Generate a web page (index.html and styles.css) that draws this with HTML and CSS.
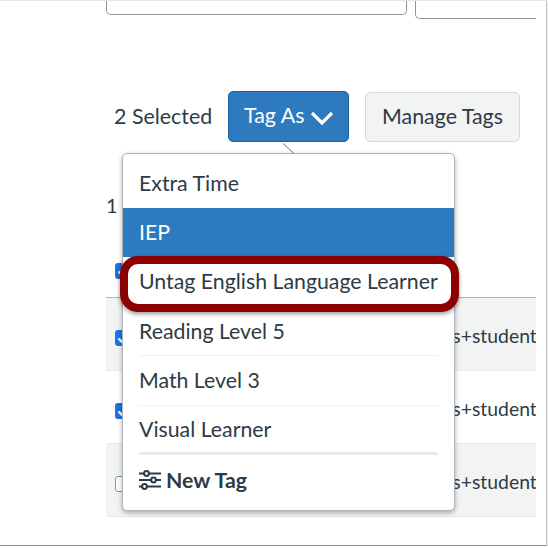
FILE: index.html
```html
<!DOCTYPE html>
<html>
	<head>
		<meta name="viewport" content="width=device-width,initial-scale=1.0">
		<title>Tag As</title>
		<link rel="stylesheet" href="styles.css">
	</head>
	<body>
		<div class="frame">
			<div class="filters">
				<div class="filter-cut filter-wide"></div>
				<div class="filter-cut filter-narrow"></div>
			</div>

			<div class="toolbar">
				<span class="selected-count">2 Selected</span>
				<button class="btn btn-primary">Tag As
					<svg class="chevron" viewBox="0 0 24 16" width="24" height="16"><path d="M2 3 L12 13 L22 3" fill="none" stroke="#fff" stroke-width="3.2"/></svg>
				</button>
				<button class="btn btn-light">Manage Tags</button>
			</div>

			<div class="count-line">1</div>

			<div class="table">
				<div class="row row-first">
					<span class="check check-on"><svg viewBox="0 0 16 16" width="16" height="16"><path d="M3.5 8.5 L6.5 11.5 L12.5 5" fill="none" stroke="#fff" stroke-width="2.4"/></svg></span>
				</div>
				<div class="row row-grey">
					<span class="check check-on"><svg viewBox="0 0 16 16" width="16" height="16"><path d="M3.5 8.5 L6.5 11.5 L12.5 5" fill="none" stroke="#fff" stroke-width="2.4"/></svg></span>
					<span class="email">es+student</span>
				</div>
				<div class="row">
					<span class="check check-on"><svg viewBox="0 0 16 16" width="16" height="16"><path d="M3.5 8.5 L6.5 11.5 L12.5 5" fill="none" stroke="#fff" stroke-width="2.4"/></svg></span>
					<span class="email">es+student</span>
				</div>
				<div class="row row-grey">
					<span class="check"></span>
					<span class="email">es+student</span>
				</div>
			</div>

			<div class="menu">
				<span class="menu-caret"></span>
				<div class="menu-item menu-item-first">Extra Time</div>
				<div class="menu-item menu-item-active">IEP</div>
				<div class="menu-item menu-item-plain">Untag English Language Learner</div>
				<div class="menu-item">Reading Level 5</div>
				<div class="menu-item">Math Level 3</div>
				<div class="menu-item menu-item-last">Visual Learner</div>
				<div class="menu-new">
					<svg class="sliders" viewBox="0 0 22 20" width="22" height="20">
						<g fill="none" stroke="#2d3b45" stroke-width="2">
							<path d="M0 3.5 H5 M10 3.5 H22 M0 10 H12 M17 10 H22 M0 16.5 H3 M8 16.5 H22"/>
							<circle cx="7.5" cy="3.5" r="2.4"/>
							<circle cx="14.5" cy="10" r="2.4"/>
							<circle cx="5.5" cy="16.5" r="2.4"/>
						</g>
					</svg>
					New Tag
				</div>
				<div class="callout"></div>
			</div>
		</div>
	</body>
</html>
```

FILE: styles.css
```css
* {
	box-sizing: border-box;
}

body {
	margin: 0;
	background: #fff;
	font-family: Lato, "Liberation Sans", sans-serif;
	color: #2d3b45;
}

.frame {
	position: relative;
	width: 547px;
	height: 546px;
	padding: 0 10px 0 106px;
	border-top: 1px solid #e8e8e8;
	border-bottom: 1px solid #8e8e8e;
	border-right: 1px solid #c4c4c4;
	box-shadow: 0 1px 2px rgba(0, 0, 0, 0.3);
	overflow: hidden;
}

.filters {
	display: flex;
	align-items: flex-start;
	gap: 8px;
	height: 18px;
}

.filter-cut {
	border: 1px solid #8a949e;
	border-top: none;
	border-radius: 0 0 5px 5px;
}

.filter-wide {
	width: 301px;
	height: 14px;
}

.filter-narrow {
	width: 121px;
	height: 18px;
	border-right: none;
	border-bottom-right-radius: 0;
}

.toolbar {
	display: flex;
	align-items: center;
	margin-top: 72px;
	padding-left: 8px;
	height: 51px;
}

.selected-count {
	font-size: 21.4px;
	width: 114px;
	margin-top: -2px;
}

.btn {
	height: 51px;
	border-radius: 5px;
	font-family: inherit;
	font-size: 21.4px;
}

.btn-primary {
	width: 121px;
	background: #2d7abf;
	border: 1px solid #22629b;
	color: #fff;
	padding: 0 0 3px 1px;
}

.chevron {
	vertical-align: -3px;
}

.btn-light {
	width: 155px;
	height: 50px;
	margin-left: 16px;
	margin-top: 1px;
	background: #f2f3f3;
	border: 1px solid #d7dadd;
	color: #2d3b45;
	padding: 0 0 2px;
}

.count-line {
	margin-top: 51px;
	font-size: 20px;
	line-height: 24px;
	height: 31px;
}

.row {
	display: flex;
	align-items: center;
	height: 73px;
	border-bottom: 1px solid #e6e8ea;
	padding: 7px 0 0 9px;
}

.row-first {
	height: 74px;
	padding-top: 21px;
	border-bottom: 1px solid #aeb5bb;
}

.row-grey {
	background: #f2f3f3;
}

.check {
	display: block;
	width: 16px;
	height: 16px;
	border: 1px solid #8a949e;
	border-radius: 3px;
	background: #fff;
}

.check-on {
	background: #1a73e8;
	border: none;
}

.check svg {
	display: block;
}

.email {
	margin-left: auto;
	margin-top: -5px;
	width: 94px;
	overflow: hidden;
	white-space: nowrap;
	font-size: 19.4px;
}

/* dropdown lies over the table */
.menu {
	position: absolute;
	left: 122px;
	top: 152px;
	width: 333px;
	height: 358px;
	background: #fff;
	border: 1px solid #aeb5bb;
	border-radius: 5px;
	box-shadow: 0 2px 5px rgba(0, 0, 0, 0.3);
}

.menu-caret {
	position: absolute;
	left: 158px;
	top: -6px;
	width: 15px;
	height: 1px;
	background: #8a949e;
	transform: rotate(43deg);
}

.menu-item {
	height: 49.5px;
	margin: 0 16px;
	border-bottom: 1px solid #eef0f1;
	font-size: 21.3px;
	line-height: 48px;
	white-space: nowrap;
}

.menu-item-first {
	height: 54px;
	margin: 0;
	padding: 5px 16px 0;
	border-bottom: none;
}

.menu-item-active {
	height: 49px;
	margin: 0;
	padding: 0 16px;
	background: #2d7abf;
	border-bottom: none;
	color: #fff;
}

.menu-item-plain {
	border-bottom: none;
}

.menu-item-last {
	line-height: 46px;
	border-bottom: 3px solid #e8eaeb;
}

.menu-new {
	display: flex;
	align-items: center;
	gap: 5px;
	margin: 0 16px;
	height: 50px;
	font-size: 21.3px;
	font-weight: 700;
}

.callout {
	position: absolute;
	left: -3px;
	top: 102px;
	width: 339px;
	height: 56px;
	border: 8px solid #8b0000;
	border-radius: 18px;
	box-shadow: 0 2px 4px rgba(0, 0, 0, 0.4);
}
```
